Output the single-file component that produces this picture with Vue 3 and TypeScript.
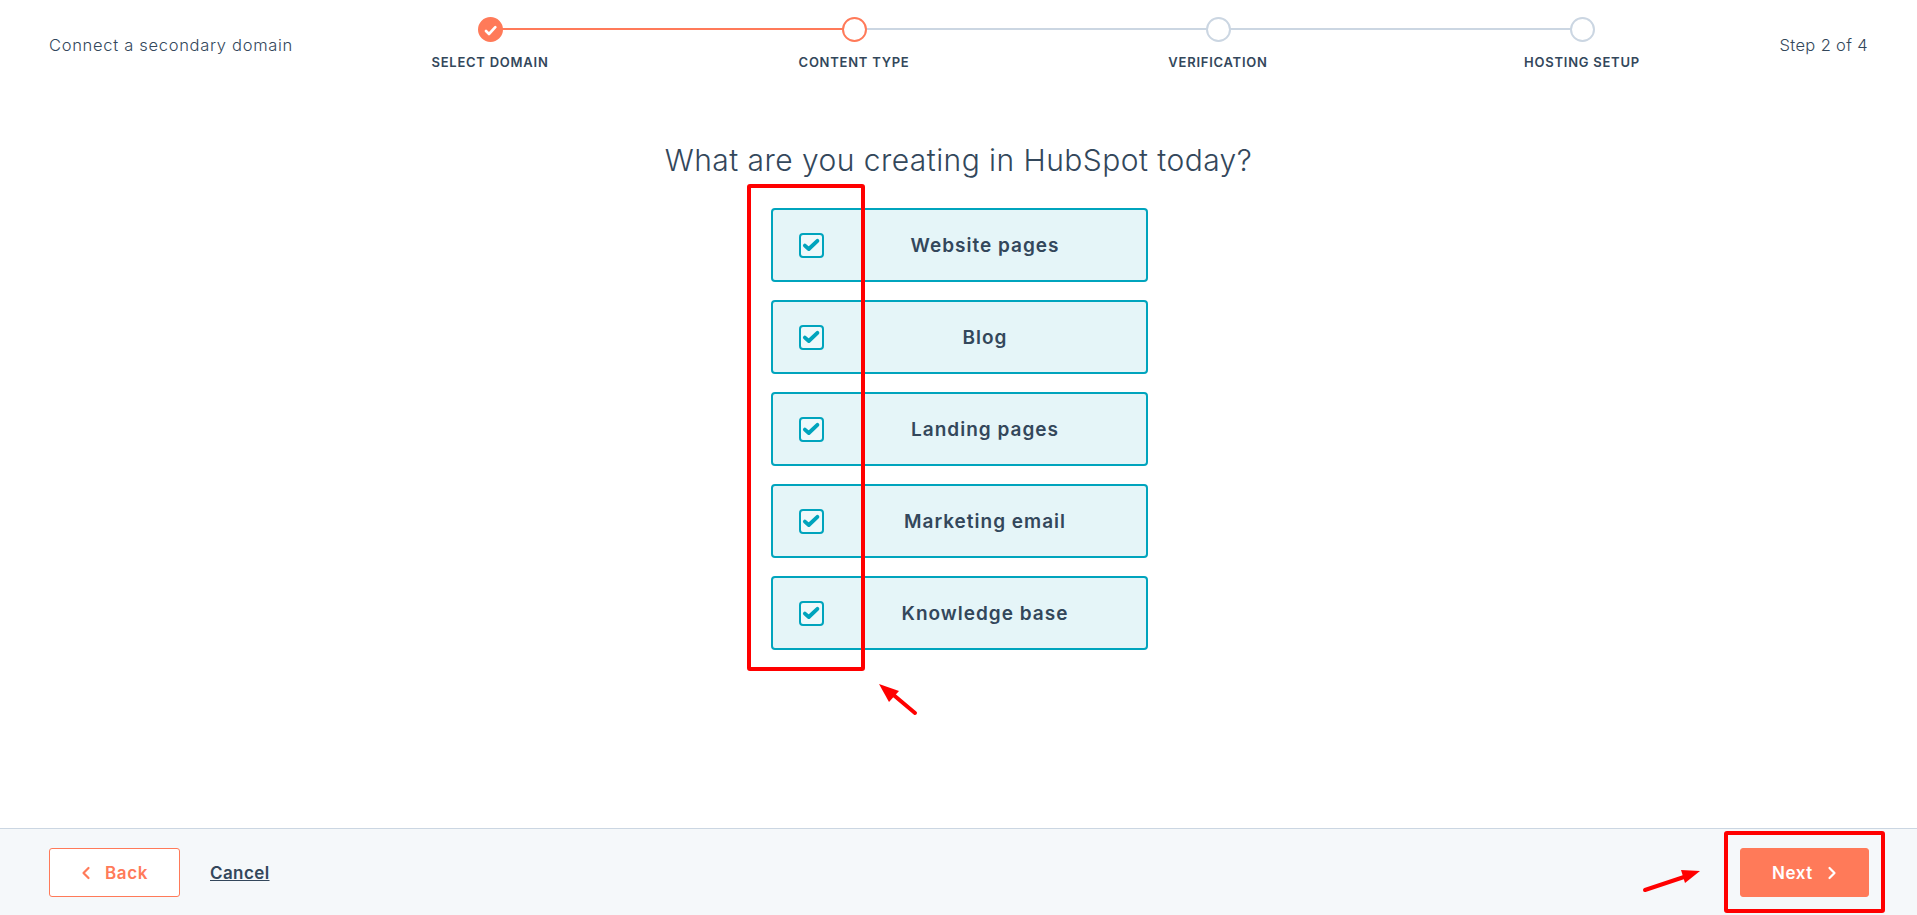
<script setup lang="ts">
interface Step { label: string; state: 'done' | 'active' | 'todo' }
const steps: Step[] = [
  { label: 'SELECT DOMAIN', state: 'done' },
  { label: 'CONTENT TYPE', state: 'active' },
  { label: 'VERIFICATION', state: 'todo' },
  { label: 'HOSTING SETUP', state: 'todo' },
]
const options: string[] = ['Website pages', 'Blog', 'Landing pages', 'Marketing email', 'Knowledge base']
</script>

<template>
  <div class="page">
    <header class="top">
      <div class="flow-name">Connect a secondary domain</div>
      <ol class="stepper">
        <li v-for="s in steps" :key="s.label" class="step" :class="s.state">
          <span class="dot">
            <svg v-if="s.state === 'done'" width="14" height="14" viewBox="0 0 14 14">
              <path d="M3 8 L6 11 L12.3 4.2" fill="none" stroke="#fff" stroke-width="2.6" stroke-linecap="round" stroke-linejoin="round" />
            </svg>
          </span>
          <span class="step-label">{{ s.label }}</span>
        </li>
      </ol>
      <div class="counter">Step 2 of 4</div>
    </header>

    <main class="main">
      <h1 class="question">What are you creating in HubSpot today?</h1>
      <div class="options">
        <div v-for="o in options" :key="o" class="option">
          <span class="box">
            <svg width="21" height="21" viewBox="0 0 21 21">
              <path d="M3.9 10.6 L7.8 14 L16.4 5.8" fill="none" stroke="#00a4bd" stroke-width="3.9" stroke-linecap="round" stroke-linejoin="round" />
            </svg>
          </span>
          <span class="option-label">{{ o }}</span>
        </div>
      </div>
    </main>

    <footer class="bottom">
      <div class="bottom-left">
        <button class="btn back">
          <svg width="10" height="14" viewBox="0 0 10 14"><path d="M7.5 2 L2.5 7 L7.5 12" fill="none" stroke="#ff7a59" stroke-width="2.2" stroke-linecap="round" stroke-linejoin="round" /></svg>
          <span>Back</span>
        </button>
        <a class="cancel">Cancel</a>
      </div>
      <button class="btn next">
        <span>Next</span>
        <svg width="10" height="14" viewBox="0 0 10 14"><path d="M2.5 2 L7.5 7 L2.5 12" fill="none" stroke="#fff" stroke-width="2.2" stroke-linecap="round" stroke-linejoin="round" /></svg>
      </button>
    </footer>

    <svg class="marks" width="1917" height="915" viewBox="0 0 1917 915">
      <rect x="749" y="186" width="114" height="483" rx="1" fill="none" stroke="#f00" stroke-width="4" />
      <rect x="1726" y="833" width="157" height="78" rx="1" fill="none" stroke="#f00" stroke-width="4" />
      <path d="M915 713 L890 692" stroke="#f00" stroke-width="4" stroke-linecap="round" />
      <path d="M879 684 L899 691 L889 702 Z" fill="#f00" />
      <path d="M1645 890 L1684 877" stroke="#f00" stroke-width="4" stroke-linecap="round" />
      <path d="M1700 871 L1681 870 L1685 883 Z" fill="#f00" />
    </svg>
  </div>
</template>

<style>
html, body { margin: 0; overflow: hidden; background: #fff; }
</style>

<style scoped>
.page {
  position: relative;
  width: 1917px;
  height: 915px;
  display: flex;
  flex-direction: column;
  font-family: Inter, Lato, sans-serif;
  color: #33475b;
  overflow: hidden;
}
.top {
  height: 90px;
  padding: 0 49px;
  display: flex;
  justify-content: space-between;
  align-items: flex-start;
  flex: none;
}
.flow-name, .counter {
  font-size: 16.5px;
  font-weight: 300;
  line-height: 24px;
  margin-top: 33px;
  letter-spacing: 0.7px;
}
.counter { letter-spacing: 0.35px; }
.stepper {
  list-style: none;
  margin: 0;
  padding: 0;
  display: grid;
  grid-template-columns: repeat(4, 364px);
  position: absolute;
  left: 308px;
  top: 17px;
}
.step {
  display: flex;
  flex-direction: column;
  align-items: center;
  position: relative;
}
.step:not(:last-child)::after {
  content: "";
  position: absolute;
  left: 50%;
  width: 100%;
  top: 11px;
  height: 2px;
  background: #cbd6e2;
}
.step.done::after { background: #ff7a59; }
.dot {
  width: 25px;
  height: 25px;
  box-sizing: border-box;
  border-radius: 50%;
  border: 2px solid #cbd6e2;
  background: #fff;
  display: flex;
  align-items: center;
  justify-content: center;
  position: relative;
  z-index: 1;
}
.done .dot { background: #ff7a59; border-color: #ff7a59; }
.active .dot { border-color: #ff7a59; }
.step-label {
  margin-top: 12px;
  font-size: 13px;
  font-weight: 600;
  line-height: 16px;
  letter-spacing: 0.75px;
}
.main {
  flex: 1;
  display: flex;
  flex-direction: column;
  align-items: center;
}
.question {
  margin: 50px 0 0;
  font-size: 30px;
  font-weight: 300;
  line-height: 40px;
  letter-spacing: 0.45px;
}
.options {
  margin: 28px 0 0 2px;
  display: flex;
  flex-direction: column;
  gap: 18px;
  width: 377px;
}
.option {
  height: 74px;
  box-sizing: border-box;
  border: 2px solid #00a4bd;
  border-radius: 4px;
  background: #e5f5f8;
  display: flex;
  align-items: center;
  padding-left: 26px;
}
.box {
  width: 25px;
  height: 25px;
  box-sizing: border-box;
  border: 2px solid #00a4bd;
  border-radius: 4px;
  background: #eef9fb;
  display: flex;
  align-items: center;
  justify-content: center;
  flex: none;
}
.option-label {
  flex: 1;
  text-align: center;
  font-size: 19px;
  font-weight: 600;
  letter-spacing: 1px;
}
.bottom {
  flex: none;
  height: 87px;
  box-sizing: border-box;
  border-top: 1px solid #cbd6e2;
  background: #f5f8fa;
  padding: 0 48px 0 49px;
  display: flex;
  align-items: center;
  justify-content: space-between;
}
.bottom-left {
  display: flex;
  align-items: center;
  gap: 30px;
}
.btn {
  height: 49px;
  box-sizing: border-box;
  border-radius: 3px;
  border: 1px solid #ff7a59;
  display: flex;
  align-items: center;
  justify-content: center;
  gap: 14px;
  font-family: inherit;
  font-size: 17px;
  font-weight: 600;
  letter-spacing: 0.6px;
  padding: 1px 0 0;
}
.back { background: #fff; color: #ff7a59; width: 131px; }
.next { background: #ff7a59; color: #fff; width: 129px; }
.cancel {
  font-size: 17px;
  font-weight: 600;
  letter-spacing: 0.4px;
  text-decoration: underline;
  padding-top: 2px;
}
.marks {
  position: absolute;
  left: 0;
  top: 0;
  pointer-events: none;
}
</style>
